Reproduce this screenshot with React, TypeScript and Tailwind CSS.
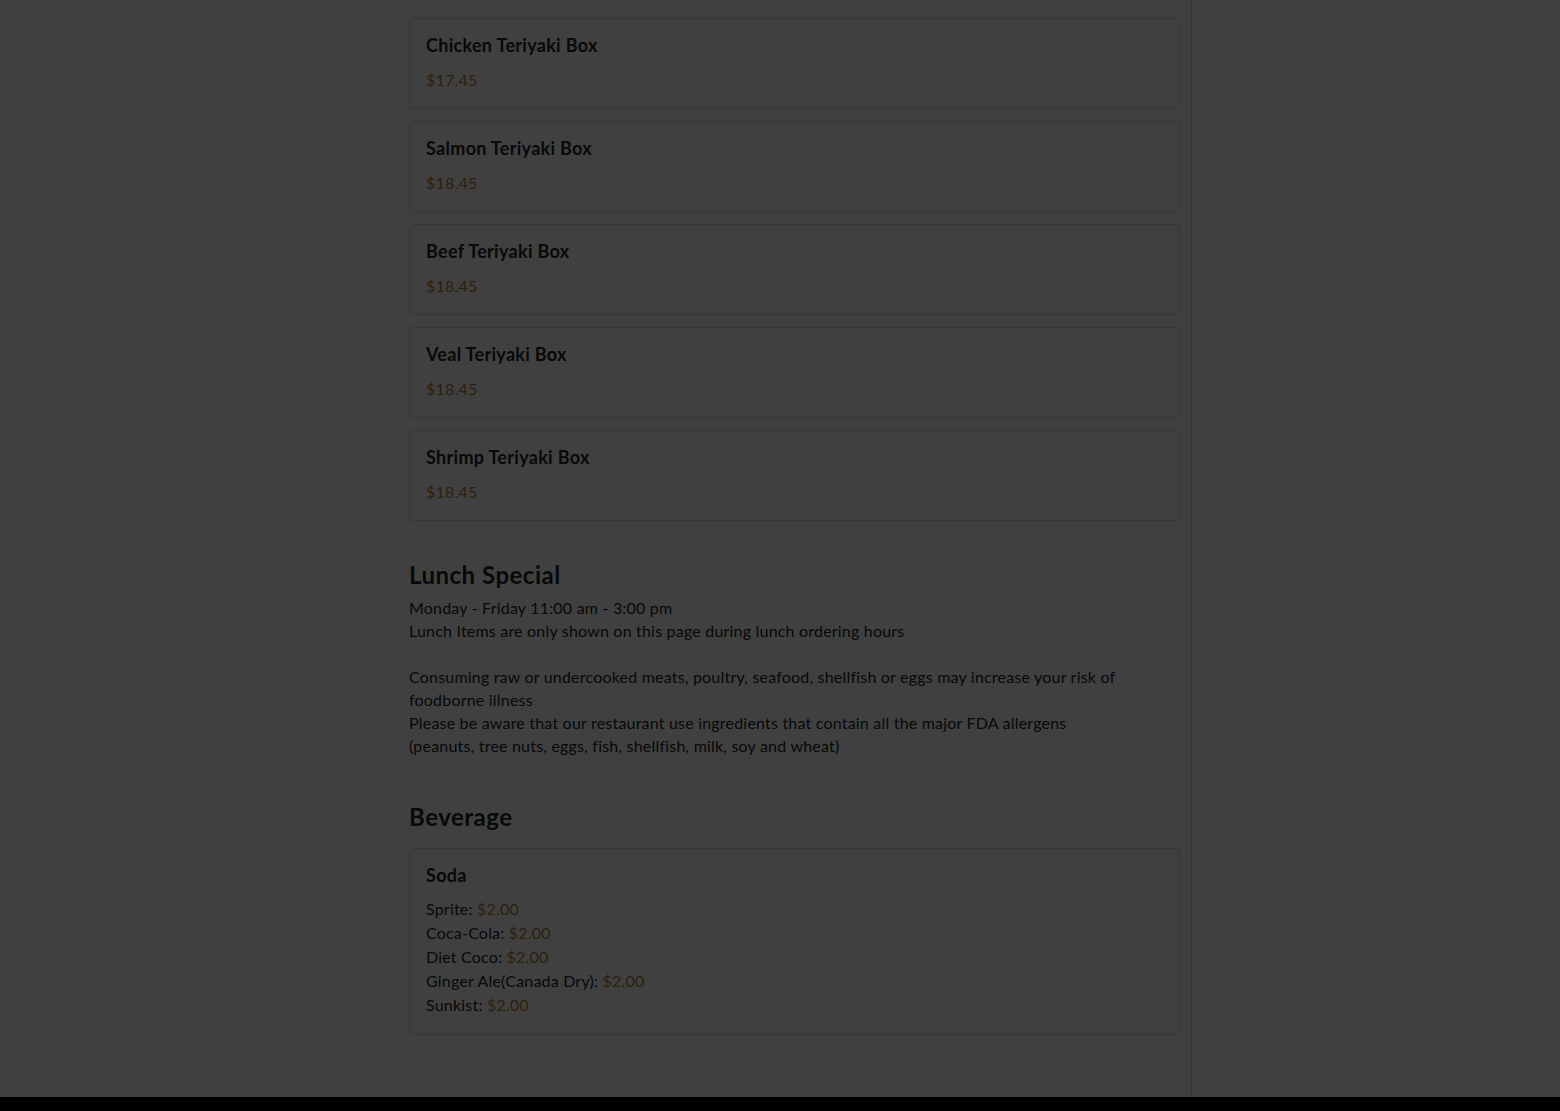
const teriyaki = [
  { name: 'Chicken Teriyaki Box', price: '$17.45' },
  { name: 'Salmon Teriyaki Box', price: '$18.45' },
  { name: 'Beef Teriyaki Box', price: '$18.45' },
  { name: 'Veal Teriyaki Box', price: '$18.45' },
  { name: 'Shrimp Teriyaki Box', price: '$18.45' },
];

const sodas = [
  { name: 'Sprite', price: '$2.00' },
  { name: 'Coca-Cola', price: '$2.00' },
  { name: 'Diet Coco', price: '$2.00' },
  { name: 'Ginger Ale(Canada Dry)', price: '$2.00' },
  { name: 'Sunkist', price: '$2.00' },
];

export default function App() {
  return (
    <div
      className="relative min-h-[1111px] bg-white text-[#212529] tracking-[0.2px]"
      style={{ fontFamily: 'Lato, "Noto Sans", sans-serif' }}
    >
      <div className="flex">
        <div className="w-[1192px] border-r border-[#d6d8db]">
          <div className="ml-[409px] w-[771px] pt-[18px] pb-[62px]">
            <div className="flex flex-col gap-3">
              {teriyaki.map((item) => (
                <div key={item.name} className="rounded border border-[#d6d8db] p-4">
                  <h3 className="text-[18px] font-bold leading-[21px] tracking-[0.3px] mb-3">{item.name}</h3>
                  <p className="text-base leading-6 text-[#b3803f]">{item.price}</p>
                </div>
              ))}
            </div>

            <h2 className="mt-[40px] mb-[7px] text-2xl font-bold leading-[28px] tracking-[0.5px]">Lunch Special</h2>
            <div className="text-base leading-[23px]">
              <p>Monday - Friday 11:00 am - 3:00 pm</p>
              <p>Lunch Items are only shown on this page during lunch ordering hours</p>
              <p>&nbsp;</p>
              <p className="w-[720px]">
                Consuming raw or undercooked meats, poultry, seafood, shellfish or eggs may increase your risk of
                foodborne illness
              </p>
              <p>Please be aware that our restaurant use ingredients that contain all the major FDA allergens</p>
              <p>(peanuts, tree nuts, eggs, fish, shellfish, milk, soy and wheat)</p>
            </div>

            <h2 className="mt-[46px] mb-[17px] text-2xl font-bold leading-[28px] tracking-[0.5px]">Beverage</h2>
            <div className="rounded border border-[#d6d8db] px-4 pt-4 pb-[17px]">
              <h3 className="text-[18px] font-bold leading-[21px] tracking-[0.3px] mb-[11px]">Soda</h3>
              <ul className="text-base leading-6">
                {sodas.map((s) => (
                  <li key={s.name}>
                    {s.name}: <span className="text-[#b3803f]">{s.price}</span>
                  </li>
                ))}
              </ul>
            </div>
          </div>
        </div>
        <div className="flex-1" />
      </div>
      <footer className="h-[200px] bg-black" />

      <div className="fixed inset-0 bg-black/75" />
    </div>
  );
}
